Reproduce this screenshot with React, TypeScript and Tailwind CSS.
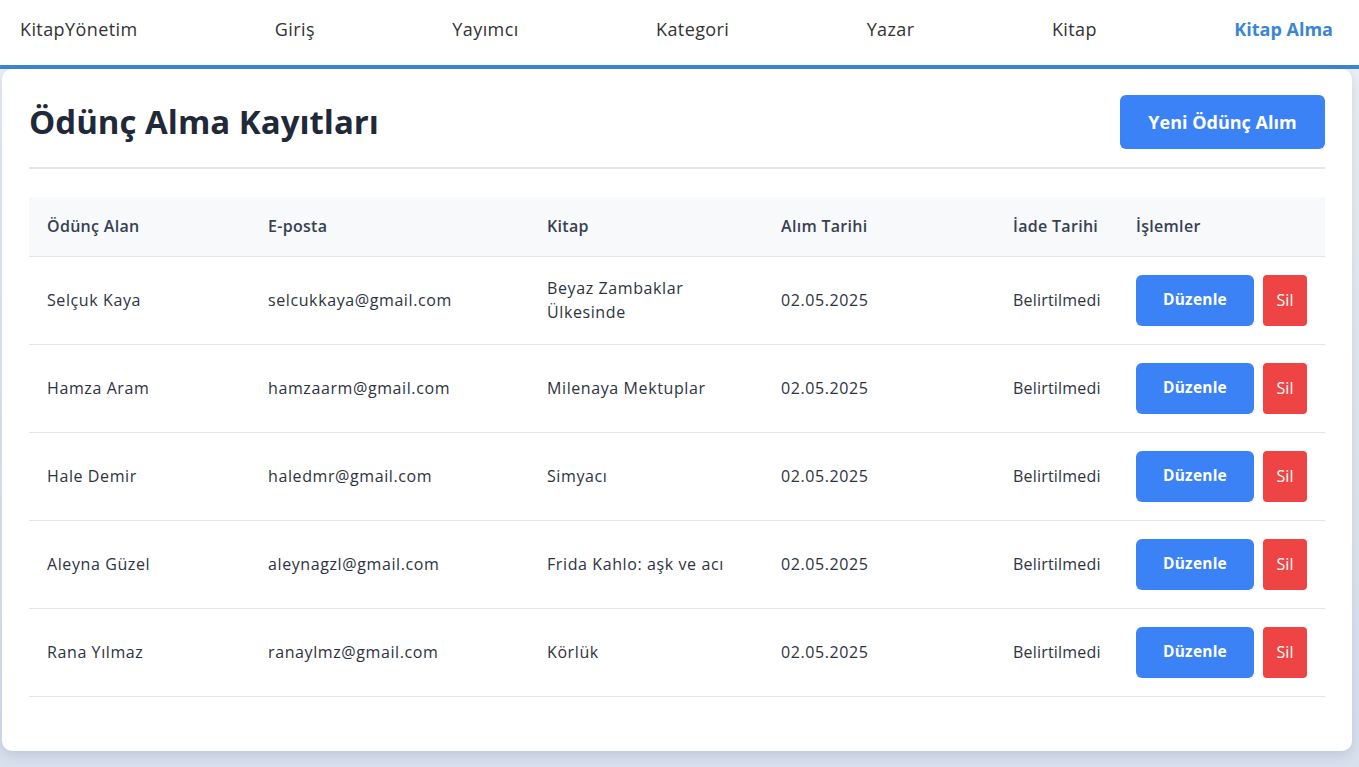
import React from 'react';

interface Kayit {
  ad: string;
  eposta: string;
  kitap: string;
  alim: string;
  iade: string;
}

const kayitlar: Kayit[] = [
  { ad: 'Selçuk Kaya', eposta: 'selcukkaya@gmail.com', kitap: 'Beyaz Zambaklar Ülkesinde', alim: '02.05.2025', iade: 'Belirtilmedi' },
  { ad: 'Hamza Aram', eposta: 'hamzaarm@gmail.com', kitap: 'Milenaya Mektuplar', alim: '02.05.2025', iade: 'Belirtilmedi' },
  { ad: 'Hale Demir', eposta: 'haledmr@gmail.com', kitap: 'Simyacı', alim: '02.05.2025', iade: 'Belirtilmedi' },
  { ad: 'Aleyna Güzel', eposta: 'aleynagzl@gmail.com', kitap: 'Frida Kahlo: aşk ve acı', alim: '02.05.2025', iade: 'Belirtilmedi' },
  { ad: 'Rana Yılmaz', eposta: 'ranaylmz@gmail.com', kitap: 'Körlük', alim: '02.05.2025', iade: 'Belirtilmedi' }
];

const menu = ['Giriş', 'Yayımcı', 'Kategori', 'Yazar', 'Kitap'];

export default function App() {
  return (
    <div
      className="min-h-screen bg-gradient-to-b from-[#eef1f6] to-[#d9e1ee] text-[#333]"
      style={{ fontFamily: '"Open Sans", "Noto Sans", sans-serif' }}
    >
      {/* üst menü */}
      <nav className="h-[69px] bg-white border-b-4 border-[#3a86d4] flex items-center justify-between pl-5 pr-[26px] pb-[6px] text-[18px] tracking-[0.4px]">
        <span>KitapYönetim</span>
        {menu.map(m => (
          <span key={m}>{m}</span>
        ))}
        <span className="font-bold text-[#3a86d4] tracking-normal">Kitap Alma</span>
      </nav>

      <div className="ml-[2px] w-[1350px] bg-white rounded-[10px] shadow-[0_4px_14px_rgba(30,50,90,0.15)] px-[27px] pt-[26px] pb-[54px]">
        <div className="flex items-center justify-between pb-[18px] border-b-2 border-[#e5e7eb]">
          <h1 className="text-[33px] font-bold text-[#1f2937]">Ödünç Alma Kayıtları</h1>
          <button className="w-[205px] h-[54px] rounded-md bg-[#3b82f6] text-white font-bold text-[18px]">
            Yeni Ödünç Alım
          </button>
        </div>

        <table className="w-full mt-[28px] text-[16px] tracking-[0.6px] border-collapse">
          <thead>
            <tr className="bg-[#f8f9fb] border-b border-[#e2e5ea] h-[59px] text-left text-[#374151]">
              <th className="w-[221px] pl-[18px] font-semibold tracking-[0.3px]">Ödünç Alan</th>
              <th className="w-[279px] pl-[18px] font-semibold tracking-[0.3px]">E-posta</th>
              <th className="w-[234px] pl-[18px] font-semibold tracking-[0.3px]">Kitap</th>
              <th className="w-[232px] pl-[18px] font-semibold tracking-[0.3px]">Alım Tarihi</th>
              <th className="w-[123px] pl-[18px] font-semibold tracking-[0.3px]">İade Tarihi</th>
              <th className="pl-[18px] font-semibold tracking-[0.3px]">İşlemler</th>
            </tr>
          </thead>
          <tbody>
            {kayitlar.map(k => (
              <tr key={k.ad} className="h-[88px] border-b border-[#e2e5ea] text-[#2d3340]">
                <td className="pl-[18px]">{k.ad}</td>
                <td className="pl-[18px]">{k.eposta}</td>
                <td className="pl-[18px] pr-[10px] leading-6">{k.kitap}</td>
                <td className="pl-[18px]">{k.alim}</td>
                <td className="pl-[18px] tracking-[0.2px]">{k.iade}</td>
                <td className="pl-[18px]">
                  <div className="flex gap-[9px]">
                    <button className="w-[118px] h-[51px] rounded-md bg-[#3b82f6] text-white font-bold text-[15.5px] tracking-[0.2px]">
                      Düzenle
                    </button>
                    <button className="w-[44px] h-[51px] rounded bg-[#ef4444] text-white text-[16px] font-medium tracking-normal">
                      Sil
                    </button>
                  </div>
                </td>
              </tr>
            ))}
          </tbody>
        </table>
      </div>
    </div>
  );
}
